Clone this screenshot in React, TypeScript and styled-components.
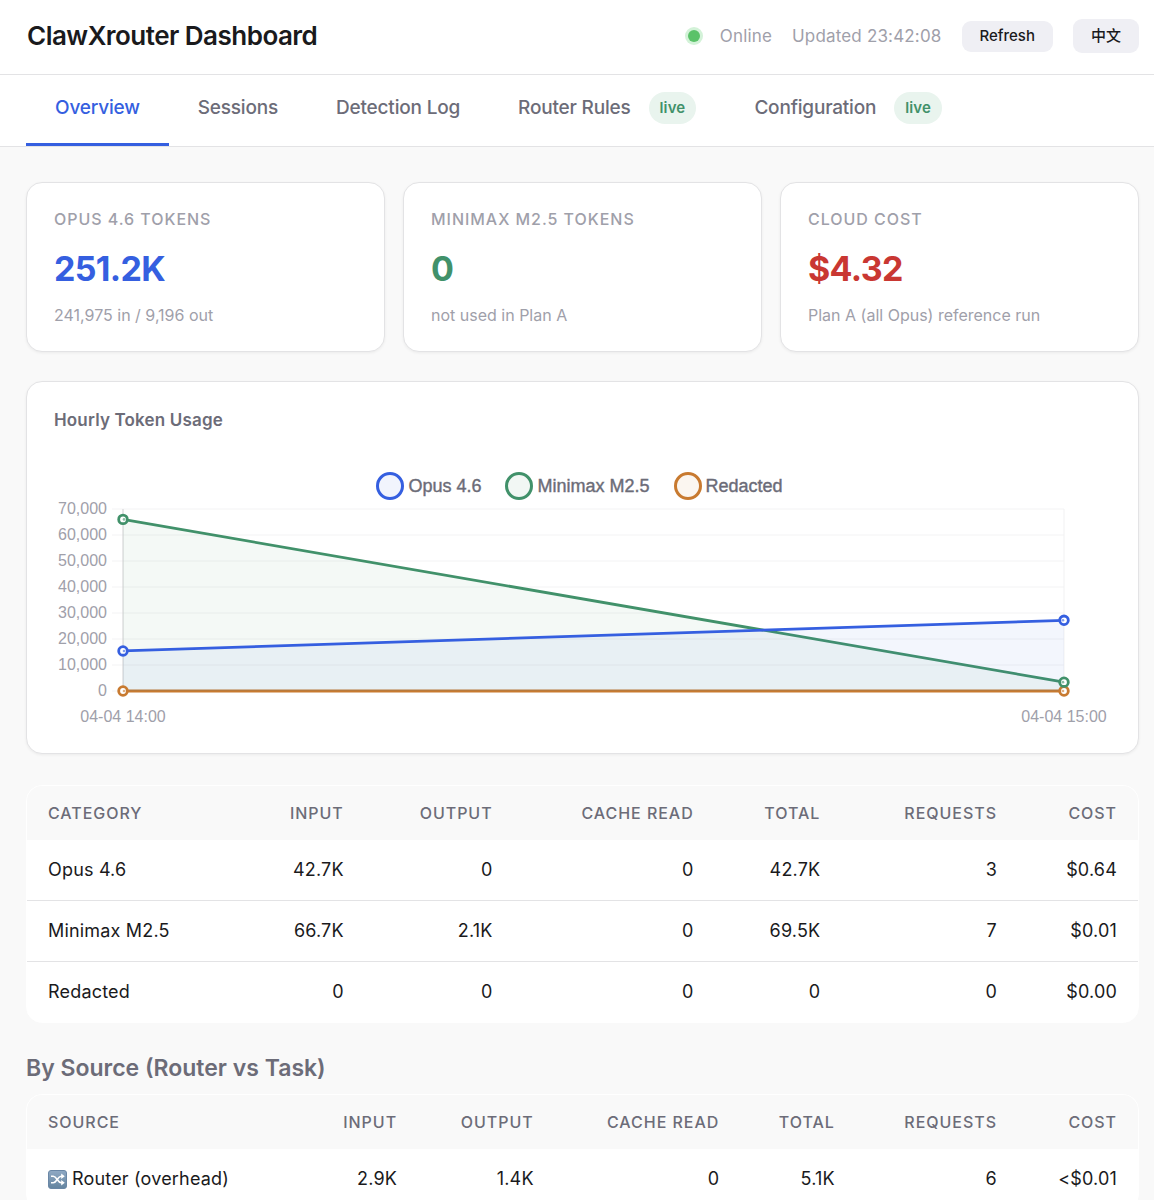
import React, { useLayoutEffect, useRef, useState } from "react";
import styled, { createGlobalStyle } from "styled-components";

const color = {
  page: "#f9f9f9",
  surface: "#ffffff",
  line: "#e3e3e5",
  ink: "#1a1a1c",
  secondary: "#6c6c78",
  muted: "#9fa0aa",
  blue: "#355fe0",
  green: "#41916a",
  orange: "#c87a30",
  red: "#c93732",
};

const sans = `Inter, "Noto Sans CJK SC", sans-serif`;
const chartFont = `"Liberation Sans", Arial, sans-serif`;

const GlobalStyle = createGlobalStyle`
  *, *::before, *::after { box-sizing: border-box; }
  body {
    margin: 0;
    background: ${color.page};
    color: ${color.ink};
    font-family: ${sans};
    -webkit-font-smoothing: antialiased;
  }
  button { font-family: inherit; border: 0; cursor: pointer; }
  h1, h2, p { margin: 0; }
`;

const Shell = styled.div`
  display: flex;
  flex-direction: column;
  height: 100vh;
`;

const Header = styled.header`
  display: flex;
  flex: none;
  align-items: center;
  justify-content: space-between;
  padding: 19px 15px 21px 27px;
  background: ${color.surface};
  border-bottom: 1px solid ${color.line};
`;

const Title = styled.h1`
  font-size: 26px;
  line-height: 34px;
  font-weight: 600;
  letter-spacing: -0.02em;
`;

const HeaderTools = styled.div`
  display: flex;
  align-items: center;
  gap: 20px;
`;

const Status = styled.span`
  display: flex;
  align-items: center;
  gap: 20px;
  font-size: 17px;
  line-height: 24px;
  letter-spacing: 0.01em;
  color: ${color.muted};
`;

const Dot = styled.span`
  width: 12px;
  height: 12px;
  border-radius: 50%;
  background: #5bc269;
  box-shadow: 0 0 0 3px #d3f2d8;
`;

const ToolButton = styled.button<{ $tall?: boolean }>`
  padding: ${(p) => (p.$tall ? "5px 18px" : "3px 18px 4px")};
  border-radius: 9px;
  background: #efeff4;
  color: ${color.ink};
  font-size: 15px;
  line-height: 24px;
  font-weight: 500;
`;

const Tabs = styled.nav`
  display: flex;
  flex: none;
  padding: 0 26px;
  background: ${color.surface};
  border-bottom: 1px solid ${color.line};
`;

const Tab = styled.button<{ $active?: boolean }>`
  display: flex;
  align-items: center;
  gap: 18px;
  height: 71px;
  padding: 0 29px 2px;
  background: none;
  border-bottom: 3px solid ${(p) => (p.$active ? color.blue : "transparent")};
  color: ${(p) => (p.$active ? color.blue : color.secondary)};
  font-size: 19px;
  line-height: 24px;
  font-weight: 500;
  letter-spacing: -0.01em;
  white-space: nowrap;
`;

const Live = styled.span`
  padding: 4px 11px;
  border-radius: 16px;
  background: #e9f4ee;
  color: ${color.green};
  font-size: 15px;
  font-weight: 600;
  letter-spacing: 0.01em;
`;

const Main = styled.main`
  flex: 1;
  min-height: 0;
  overflow-y: auto;
  scrollbar-width: none;
  padding: 35px 15px 30px 26px;
`;

const Stats = styled.section`
  display: grid;
  grid-template-columns: repeat(3, 1fr);
  gap: 18px;
  margin-bottom: 29px;
`;

const Card = styled.article`
  padding: 24px 27px;
  background: ${color.surface};
  border: 1px solid ${color.line};
  border-radius: 16px;
  box-shadow: 0 1px 3px rgba(0, 0, 0, 0.06);
`;

const StatLabel = styled.p`
  font-size: 16px;
  line-height: 24px;
  font-weight: 500;
  letter-spacing: 0.06em;
  text-transform: uppercase;
  color: ${color.muted};
`;

const StatValue = styled.p<{ $tone: string }>`
  margin: 16px 0 12px;
  font-size: 34px;
  line-height: 44px;
  font-weight: 700;
  letter-spacing: -0.02em;
  color: ${(p) => p.$tone};
`;

const StatNote = styled.p`
  font-size: 16px;
  line-height: 24px;
  color: ${color.muted};
`;

const ChartCard = styled(Card)`
  height: 373px;
  margin-bottom: 31px;
  padding-top: 26px;
`;

const ChartTitle = styled.h2`
  font-size: 17px;
  line-height: 24px;
  font-weight: 600;
  letter-spacing: 0.01em;
  color: ${color.secondary};
`;

const Legend = styled.div`
  display: flex;
  justify-content: center;
  gap: 24px;
  margin-top: 40px;
  padding-right: 6px;
`;

const LegendItem = styled.button`
  display: flex;
  align-items: center;
  gap: 4px;
  padding: 0;
  background: none;
  color: ${color.secondary};
  font-family: ${chartFont};
  font-size: 18px;
  line-height: 28px;
  -webkit-text-stroke: 0.4px ${color.secondary};
`;

const Ring = styled.span<{ $tone: string }>`
  width: 28px;
  height: 28px;
  border: 3px solid ${(p) => p.$tone};
  border-radius: 50%;
  background: ${(p) => p.$tone}12;
`;

const Plot = styled.svg`
  display: block;
  width: 100%;
  height: 232px;
  overflow: visible;
  font-family: ${chartFont};
  font-size: 16px;
  fill: ${color.muted};
`;

const TableCard = styled.div`
  overflow: hidden;
  border: 1px solid ${color.surface};
  border-radius: 16px;
  background: ${color.surface};
`;

const Table = styled.table`
  width: 100%;
  border-collapse: separate;
  border-spacing: 0;
  table-layout: fixed;
  font-size: 18px;
  line-height: 24px;
  letter-spacing: 0.01em;
`;

const HeadCell = styled.th<{ $width: number }>`
  width: ${(p) => p.$width}%;
  padding: 15px 21px;
  background: ${color.page};
  color: ${color.secondary};
  font-size: 16px;
  font-weight: 500;
  letter-spacing: 0.06em;
  text-align: right;
  text-transform: uppercase;
  white-space: nowrap;
  &:first-child { text-align: left; }
`;

const Cell = styled.td`
  padding: 18px 21px;
  text-align: right;
  white-space: nowrap;
  &:first-child { text-align: left; }
  tr + tr > & { border-top: 1px solid ${color.line}; }
`;

const SectionTitle = styled.h2`
  margin: 30px 0 11px;
  font-size: 23px;
  line-height: 30px;
  font-weight: 600;
  color: ${color.secondary};
`;

const SourceName = styled.span`
  display: flex;
  align-items: center;
  gap: 5px;
`;

const stats = [
  { label: "Opus 4.6 Tokens", value: "251.2K", note: "241,975 in / 9,196 out", tone: color.blue },
  { label: "Minimax M2.5 Tokens", value: "0", note: "not used in Plan A", tone: color.green },
  { label: "Cloud Cost", value: "$4.32", note: "Plan A (all Opus) reference run", tone: color.red },
];

const series = [
  { name: "Opus 4.6", tone: color.blue, values: [15400, 27200] },
  { name: "Minimax M2.5", tone: color.green, values: [66000, 3400] },
  { name: "Redacted", tone: color.orange, values: [0, 0] },
];

const hours = ["04-04 14:00", "04-04 15:00"];
const ticks = [0, 10000, 20000, 30000, 40000, 50000, 60000, 70000];

const metrics = ["Input", "Output", "Cache Read", "Total", "Requests", "Cost"];

const categoryRows = [
  ["Opus 4.6", "42.7K", "0", "0", "42.7K", "3", "$0.64"],
  ["Minimax M2.5", "66.7K", "2.1K", "0", "69.5K", "7", "$0.01"],
  ["Redacted", "0", "0", "0", "0", "0", "$0.00"],
];

function ShuffleIcon() {
  return (
    <svg width="19" height="19" viewBox="0 0 19 19" aria-hidden="true">
      <defs>
        <linearGradient id="tile" x1="0" y1="0" x2="0" y2="1">
          <stop offset="0" stopColor="#8fa9c4" />
          <stop offset="1" stopColor="#64849f" />
        </linearGradient>
      </defs>
      <rect x="0.5" y="0.5" width="18" height="18" rx="2.5" fill="url(#tile)" stroke="#6a87a6" />
      <g fill="none" stroke="#fff" strokeWidth="1.6">
        <path d="M3 6.3h2.3c3.6 0 4.2 6.4 7.8 6.4h1" />
        <path d="M3 12.7h2.3c3.6 0 4.2-6.4 7.8-6.4h1" />
      </g>
      <path d="M13.2 3.6 16.8 6.3l-3.6 2.7zM13.2 10l3.6 2.7-3.6 2.7z" fill="#fff" />
    </svg>
  );
}

function HourlyPlot() {
  const ref = useRef<SVGSVGElement>(null);
  const [width, setWidth] = useState(1056);
  useLayoutEffect(() => {
    const node = ref.current;
    if (!node) return;
    const observer = new ResizeObserver(() => setWidth(node.clientWidth));
    observer.observe(node);
    return () => observer.disconnect();
  }, []);

  const left = 69;
  const right = width - 47;
  const bottom = 191;
  const y = (value: number) => bottom - (value / 70000) * 182;
  const backToFront = [...series].reverse();

  return (
    <Plot ref={ref} role="img" aria-label="Hourly token usage">
      {ticks.map((tick) => (
        <g key={tick}>
          <line x1={left - 11} x2={right} y1={y(tick)} y2={y(tick)} stroke="#f3f3f4" />
          <text x={left - 16} y={y(tick) + 5} textAnchor="end">
            {tick.toLocaleString("en-US")}
          </text>
        </g>
      ))}
      <line x1={right} x2={right} y1={y(70000)} y2={bottom} stroke="#f1f1f2" />
      <line x1={left} x2={left} y1={y(70000)} y2={bottom} stroke="#cfcfd1" />
      {backToFront.map((s) => {
        const a = y(s.values[0]);
        const b = y(s.values[1]);
        return (
          <g key={s.name}>
            <path d={`M${left} ${a}L${right} ${b}V${bottom}H${left}Z`} fill={s.tone} opacity="0.06" />
            <line x1={left} y1={a} x2={right} y2={b} stroke={s.tone} strokeWidth="2.8" />
          </g>
        );
      })}
      {backToFront.map((s) =>
        s.values.map((v, i) => (
          <g key={s.name + i}>
            <circle cx={i ? right : left} cy={y(v)} r="4.3" fill="#fff" stroke={s.tone} strokeWidth="2.8" />
            <circle cx={i ? right - 1 : left + 1} cy={y(v)} r="1.3" fill={s.tone} opacity="0.6" />
          </g>
        ))
      )}
      {hours.map((hour, i) => (
        <text key={hour} x={i ? right : left} y={bottom + 31} textAnchor="middle">
          {hour}
        </text>
      ))}
    </Plot>
  );
}

function UsageTable({ head, widths, rows }: { head: string[]; widths: number[]; rows: React.ReactNode[][] }) {
  return (
    <TableCard>
      <Table>
        <thead>
          <tr>
            {head.map((h, i) => (
              <HeadCell key={h} scope="col" $width={widths[i]}>
                {h}
              </HeadCell>
            ))}
          </tr>
        </thead>
        <tbody>
          {rows.map((row, r) => (
            <tr key={r}>
              {row.map((value, c) => (
                <Cell key={c}>{value}</Cell>
              ))}
            </tr>
          ))}
        </tbody>
      </Table>
    </TableCard>
  );
}

export default function App() {
  return (
    <Shell>
      <GlobalStyle />
      <Header>
        <Title>ClawXrouter Dashboard</Title>
        <HeaderTools>
          <Status>
            <Dot />
            Online
          </Status>
          <Status>Updated 23:42:08</Status>
          <ToolButton type="button">Refresh</ToolButton>
          <ToolButton type="button" $tall>
            中文
          </ToolButton>
        </HeaderTools>
      </Header>
      <Tabs aria-label="Dashboard sections">
        <Tab type="button" $active aria-current="page">
          Overview
        </Tab>
        <Tab type="button">Sessions</Tab>
        <Tab type="button">Detection Log</Tab>
        <Tab type="button">
          Router Rules <Live>live</Live>
        </Tab>
        <Tab type="button">
          Configuration <Live>live</Live>
        </Tab>
      </Tabs>
      <Main>
        <Stats>
          {stats.map((s) => (
            <Card key={s.label}>
              <StatLabel>{s.label}</StatLabel>
              <StatValue $tone={s.tone}>{s.value}</StatValue>
              <StatNote>{s.note}</StatNote>
            </Card>
          ))}
        </Stats>
        <ChartCard>
          <ChartTitle>Hourly Token Usage</ChartTitle>
          <Legend>
            {series.map((s) => (
              <LegendItem key={s.name} type="button">
                <Ring $tone={s.tone} />
                {s.name}
              </LegendItem>
            ))}
          </Legend>
          <HourlyPlot />
        </ChartCard>
        <UsageTable
          head={["Category", ...metrics]}
          widths={[17, 13.4, 13.4, 18.1, 11.4, 15.9, 10.8]}
          rows={categoryRows}
        />
        <SectionTitle>By Source (Router vs Task)</SectionTitle>
        <UsageTable
          head={["Source", ...metrics]}
          widths={[22, 13.2, 12.3, 16.7, 10.4, 14.6, 10.8]}
          rows={[
            [
              <SourceName key="router">
                <ShuffleIcon />
                Router (overhead)
              </SourceName>,
              "2.9K",
              "1.4K",
              "0",
              "5.1K",
              "6",
              "<$0.01",
            ],
          ]}
        />
      </Main>
    </Shell>
  );
}
